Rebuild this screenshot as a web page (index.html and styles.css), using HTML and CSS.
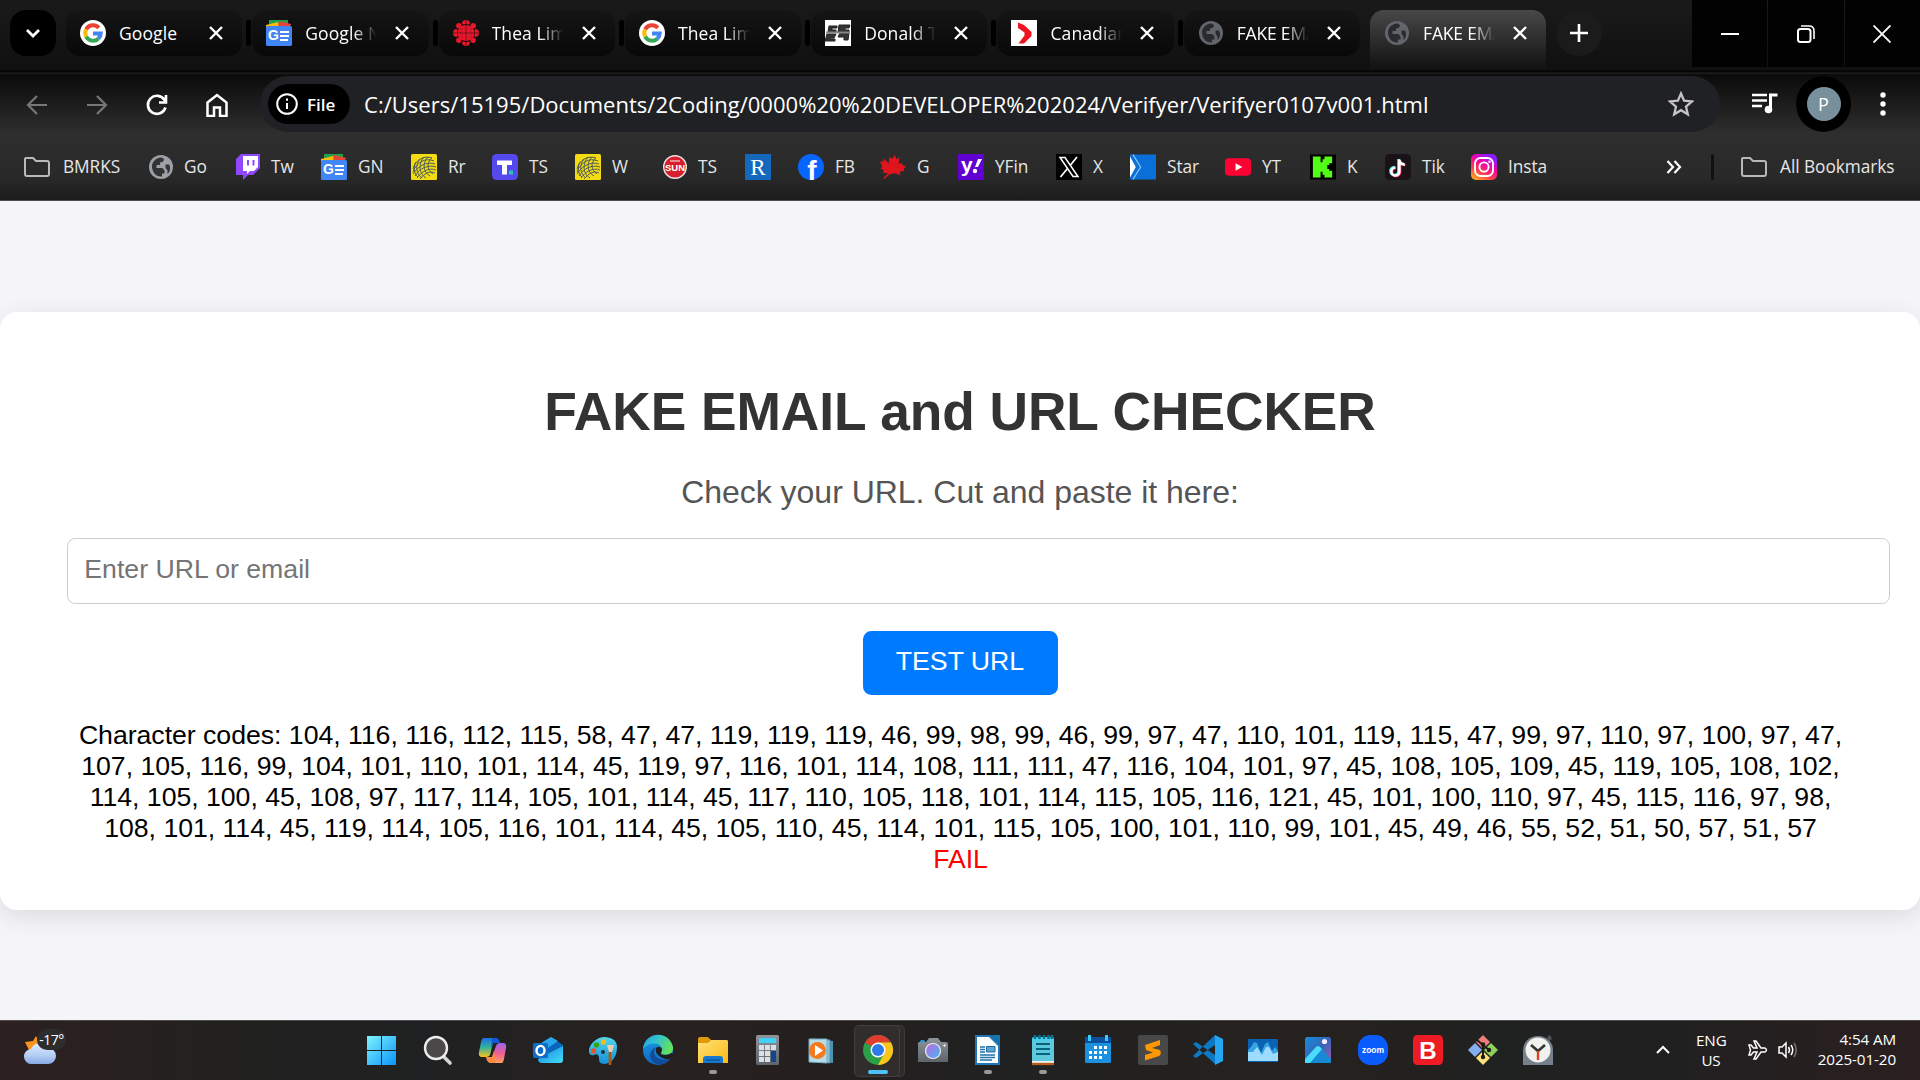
FILE: index.html
```html
<!DOCTYPE html>
<html lang="en">
<head>
<meta charset="utf-8">
<title>FAKE EMAIL and URL CHECKER</title>
<link rel="stylesheet" href="styles.css">
</head>
<body>
<svg class="defs" width="0" height="0" aria-hidden="true">
  <defs>
    <linearGradient id="win" x1="0" y1="0" x2="1" y2="1"><stop offset="0" stop-color="#7ff3ff"/><stop offset="1" stop-color="#0a93f8"/></linearGradient>
    <linearGradient id="cop1" x1="0" y1="0" x2="0" y2="1"><stop offset="0" stop-color="#1c6fe8"/><stop offset=".5" stop-color="#35b39a"/><stop offset="1" stop-color="#f8c21c"/></linearGradient>
    <linearGradient id="cop2" x1="0" y1="0" x2="0" y2="1"><stop offset="0" stop-color="#9a63f0"/><stop offset=".55" stop-color="#f4608c"/><stop offset="1" stop-color="#ffa05a"/></linearGradient>
    <linearGradient id="blue" x1="0" y1="0" x2="1" y2="1"><stop offset="0" stop-color="#1182dc"/><stop offset="1" stop-color="#45dcf8"/></linearGradient>
    <linearGradient id="sky" x1="0" y1="0" x2="0" y2="1"><stop offset="0" stop-color="#4fd6f0"/><stop offset="1" stop-color="#1590d8"/></linearGradient>
    <linearGradient id="edgeTop" x1="0" y1="0" x2="1" y2=".4"><stop offset="0" stop-color="#1f9fe0"/><stop offset=".5" stop-color="#35c4cc"/><stop offset="1" stop-color="#62e05e"/></linearGradient>
    <linearGradient id="edgeLow" x1="0" y1="0" x2="0" y2="1"><stop offset="0" stop-color="#1c9be2"/><stop offset="1" stop-color="#0d67c6"/></linearGradient>
    <linearGradient id="yellow" x1="0" y1="0" x2="1" y2="1"><stop offset="0" stop-color="#ffe07a"/><stop offset="1" stop-color="#fbbb12"/></linearGradient>
    <linearGradient id="metal" x1="0" y1="0" x2="0" y2="1"><stop offset="0" stop-color="#8d949b"/><stop offset="1" stop-color="#5e646a"/></linearGradient>
    <linearGradient id="lens" x1="0" y1="0" x2="1" y2="1"><stop offset="0" stop-color="#c765e0"/><stop offset="1" stop-color="#3bb8f6"/></linearGradient>
    <linearGradient id="photo" x1="0" y1="0" x2="1" y2="1"><stop offset="0" stop-color="#168ce0"/><stop offset=".5" stop-color="#3566b8"/><stop offset="1" stop-color="#a758b0"/></linearGradient>
    <linearGradient id="insta" x1="0" y1="1" x2=".6" y2="0"><stop offset="0" stop-color="#ffc414"/><stop offset=".4" stop-color="#ff3b52"/><stop offset=".7" stop-color="#f400a8"/><stop offset="1" stop-color="#8a1cff"/></linearGradient>
    <linearGradient id="cloud" x1="0" y1="0" x2="0" y2="1"><stop offset="0" stop-color="#dcebff"/><stop offset=".6" stop-color="#b4cdf5"/><stop offset="1" stop-color="#87a9e6"/></linearGradient>
    <symbol id="google" viewBox="0 0 26 26"><circle cx="13" cy="13" r="13" fill="#fff"/><g fill="none" stroke-width="4"><path d="M6.2 9.4A7.8 7.8 0 0 1 18.8 7.8" stroke="#ea4335"/><path d="M6.2 16.6A7.8 7.8 0 0 1 6.2 9.4" stroke="#fbbc05"/><path d="M18.3 18.7A7.8 7.8 0 0 1 6.2 16.6" stroke="#34a853"/><path d="M13 13.4H20.7A7.8 7.8 0 0 1 18.3 18.7" stroke="#4285f4"/></g></symbol>
    <symbol id="globe" viewBox="0 0 24 24"><circle cx="12" cy="12" r="12" fill="currentColor"/><path d="M3 10C4 6 8 2 12.500 2.500L15 4C15 6 13.500 7.500 11 7.500V10H7.500V13H13.500L15.500 15.500V18.500H13V21.500C7 22 2.500 17 3 10ZM16.500 9.500H20C22 13 21 17 18.500 19V15.500L16.500 13Z" fill="#222326" opacity=".88"/></symbol>
    <symbol id="gnews" viewBox="0 0 26 26"><path d="M3 0H22V8H3Z" fill="#24a04c"/><path d="M0 5 12 2 14 9H0Z" fill="#fbbc05"/><path d="M13 1 25 4 23 9H12Z" fill="#ea4335"/><rect y="6" width="26" height="20" rx="1.500" fill="#4285f4"/><text x="2" y="20" class="mark gn-mark">G</text><path d="M14 12h9M14 16h9M14 20h8" stroke="#fff" stroke-width="2"/></symbol>
    <symbol id="folder" viewBox="0 0 28 22"><path d="M3 2H10L13 5H24Q26 5 26 7V18Q26 20 24 20H4Q2 20 2 18V3Q2 2 3 2Z" fill="none" stroke="#b9b9b9" stroke-width="2"/></symbol>
    <symbol id="ball" viewBox="0 0 26 26"><rect width="26" height="26" rx="1.500" fill="#f5dc12"/><g fill="none" stroke="#4a5c5c" stroke-width="1"><path d="M2 15C4 6 13 1 21 4M2 18C5 9 14 3 23 7M2 20C7 12 16 7 24 10M4 22C8 15 17 10 25 13M6 24C10 18 18 13 25 16M9 25C13 20 19 16 24 19M5 8C2 13 3 20 7 23M9 5C4 11 5 20 11 24M13 3C7 10 8 20 15 24M17 3C11 9 12 18 19 22M21 4C15 9 16 16 22 20"/></g></symbol>
    <symbol id="cross" viewBox="0 0 16 16"><path d="M2 2 14 14M14 2 2 14" stroke="#fff" stroke-width="2.400"/></symbol>
  </defs>
</svg>

<header class="browser">
  <div class="tabstrip">
    <button class="tab-search"><svg width="16" height="12"><path d="M2 3 8 9 14 3" fill="none" stroke="#fff" stroke-width="2.800"/></svg></button>
    <div class="tabs">
      <div class="tab"><svg class="fav"><use href="#google"/></svg><span class="tab-title full">Google</span><svg class="close"><use href="#cross"/></svg></div>
      <div class="tab"><svg class="fav"><use href="#gnews"/></svg><span class="tab-title">Google News</span><svg class="close"><use href="#cross"/></svg></div>
      <div class="tab"><svg class="fav" viewBox="0 0 26 26"><g fill="#e8172b"><circle cx="13" cy="13" r="5.200"/><path d="M7 7Q13 3 19 7L17 9.500Q13 7 9 9.500ZM7 19Q13 23 19 19L17 16.500Q13 19 9 16.500ZM6.500 7.500Q2.500 13 6.500 18.500L9 16.500Q6.500 13 9 9.500ZM19.500 7.500Q23.500 13 19.500 18.500L17 16.500Q19.500 13 17 9.500Z"/><path d="M9 4A4 4 0 0 1 17 4L16 4.500Q13 3.600 10 4.500ZM9 22A4 4 0 0 0 17 22L16 21.500Q13 22.400 10 21.500ZM4 9A4 4 0 0 0 4 17L4.500 16Q3.600 13 4.500 10ZM22 9A4 4 0 0 1 22 17L21.500 16Q22.400 13 21.500 10Z"/><circle cx="5.800" cy="5.800" r="2.700"/><circle cx="20.200" cy="5.800" r="2.700"/><circle cx="5.800" cy="20.200" r="2.700"/><circle cx="20.200" cy="20.200" r="2.700"/></g><path d="M13 0V26M0 13H26" stroke="#0c0c0c" stroke-width=".5"/></svg><span class="tab-title">Thea Limber</span><svg class="close"><use href="#cross"/></svg></div>
      <div class="tab"><svg class="fav"><use href="#google"/></svg><span class="tab-title">Thea Limber</span><svg class="close"><use href="#cross"/></svg></div>
      <div class="tab"><svg class="fav" viewBox="0 0 26 26"><rect width="26" height="26" fill="#fff"/><path d="M4 6H12V8H7V10H11V12H3ZM14 5H25L24 8H20V10H24V12H13ZM2 14H11L9 18H5V19H10V21H0ZM15 13H24L23 20H19V17H13Z" fill="#333" stroke="#222"/><path d="M1 12.500H25" stroke="#888" stroke-width="2"/></svg><span class="tab-title">Donald Trump</span><svg class="close"><use href="#cross"/></svg></div>
      <div class="tab"><svg class="fav" viewBox="0 0 26 26"><rect width="26" height="26" fill="#fff"/><path d="M7 2.500 13 5 20.500 12V16L13 23.500H7.500L13.500 15.500V12.500L7 8Z" fill="#ee1420"/></svg><span class="tab-title">Canadian news</span><svg class="close"><use href="#cross"/></svg></div>
      <div class="tab"><svg class="fav globe dim"><use href="#globe"/></svg><span class="tab-title fake">FAKE EMAIL</span><svg class="close"><use href="#cross"/></svg></div>
      <div class="tab active"><svg class="fav globe dim"><use href="#globe"/></svg><span class="tab-title fake">FAKE EMAIL</span><svg class="close"><use href="#cross"/></svg></div>
    </div>
    <button class="new-tab"><svg width="18" height="18"><path d="M9 0V18M0 9H18" stroke="#fff" stroke-width="2.600"/></svg></button>
    <div class="window-buttons">
      <span><svg width="18" height="18"><path d="M0 9H18" stroke="#fff" stroke-width="2"/></svg></span>
      <span><svg width="18" height="18"><rect x="1" y="4" width="12.500" height="13" rx="2.500" fill="none" stroke="#fff" stroke-width="2"/><path d="M4 1H12Q17 1 17 6V14" fill="none" stroke="#fff" stroke-width="1.600"/></svg></span>
      <span><svg width="18" height="18"><path d="M.5 .5 17.500 17.500M17.500 .5 .5 17.500" stroke="#fff" stroke-width="1.900"/></svg></span>
    </div>
  </div>

  <div class="toolbar">
    <div class="nav">
      <svg viewBox="0 0 24 24"><path d="M22 12H3M12 3 3 12 12 21" fill="none" stroke="#777" stroke-width="2.200"/></svg>
      <svg viewBox="0 0 24 24"><path d="M2 12H21M12 3 21 12 12 21" fill="none" stroke="#777" stroke-width="2.200"/></svg>
      <svg viewBox="0 0 24 24"><path d="M20.500 14.500A9 9 0 1 1 19.500 7L21 9M21 2V9.500H14" fill="none" stroke="#fff" stroke-width="2.600"/></svg>
      <svg viewBox="0 0 24 24"><path d="M2.500 9.500 12 2 21.500 9.500V23H15V14.500H9V23H2.500Z" fill="none" stroke="#fff" stroke-width="2.500"/></svg>
    </div>
    <div class="omnibox">
      <span class="chip"><svg width="22" height="22"><circle cx="11" cy="11" r="9.800" fill="none" stroke="#fff" stroke-width="2"/><path d="M11 10V16M11 5.500V7.800" stroke="#fff" stroke-width="2"/></svg>File</span>
      <span class="url">C:/Users/15195/Documents/2Coding/0000%20%20DEVELOPER%202024/Verifyer/Verifyer0107v001.html</span>
      <svg class="star" viewBox="0 0 26 26"><path d="M13 2.500 16.100 9.700 24 10.400 18 15.600 19.800 23.300 13 19.200 6.200 23.300 8 15.600 2 10.400 9.900 9.700Z" fill="none" stroke="#c4c4c4" stroke-width="2.300"/></svg>
    </div>
    <svg class="media" viewBox="0 0 26 22"><path d="M0 2H15M0 7.500H15M0 13H10" stroke="#fff" stroke-width="2.500"/><path d="M18.500 16.500V2H25.500" fill="none" stroke="#fff" stroke-width="3"/><circle cx="16.500" cy="16.500" r="3.800" fill="#fff"/></svg>
    <span class="profile"><span>P</span></span>
    <svg class="dots" viewBox="0 0 6 24"><g fill="#fff"><circle cx="3" cy="3" r="2.700"/><circle cx="3" cy="12" r="2.700"/><circle cx="3" cy="21" r="2.700"/></g></svg>
  </div>

  <nav class="bookmarks">
    <span class="bm"><svg class="folder"><use href="#folder"/></svg>BMRKS</span>
    <span class="bm"><svg class="globe"><use href="#globe"/></svg>Go</span>
    <span class="bm tw"><svg viewBox="0 0 26 26"><path d="M6 0H25V14L18 21H13L8 26V21H1V5Z" fill="#9147ff"/><path d="M8 2H23V13L19 17H15L12 20V17H8Z" fill="#fff"/><path d="M13 6V11.500M18.500 6V11.500" stroke="#9147ff" stroke-width="2"/></svg>Tw</span>
    <span class="bm"><svg><use href="#gnews"/></svg>GN</span>
    <span class="bm"><svg><use href="#ball"/></svg>Rr</span>
    <span class="bm"><svg viewBox="0 0 26 26"><rect width="26" height="26" rx="4.500" fill="#5448ee"/><path d="M5 6.500H20V11H15V20.500H10V11H5Z" fill="#fff"/><rect x="17" y="16.500" width="4" height="4" fill="#1ccba8"/></svg>TS</span>
    <span class="bm"><svg><use href="#ball"/></svg>W</span>
    <span class="bm"><svg class="globe" viewBox="0 0 24 24"><circle cx="12" cy="12" r="11.300" fill="#d81e2c" stroke="#e9e4e4" stroke-width="1.400"/><text x="12" y="15.800" class="mark sun-mark">SUN</text><path d="M7 6H17" stroke="#f2b6bb" stroke-width="1.400"/></svg>TS</span>
    <span class="bm"><svg viewBox="0 0 26 26"><rect width="26" height="26" fill="#1569bd"/><text x="13" y="21" class="mark r-mark">R</text></svg></span>
    <span class="bm"><svg viewBox="0 0 26 26"><circle cx="13" cy="13" r="13" fill="#0866ff"/><text x="14" y="26" class="mark f-mark">f</text></svg>FB</span>
    <span class="bm"><svg viewBox="0 0 27 26"><path d="M15.500 .5 17 5 20 3 19.500 10 22.500 8.500 23.500 11 27 12.500 24.500 15 25.500 17 20.500 18 21 21.500 15.500 19.500 10 20.500 4.500 25.500 3.500 24.500 8.500 19.500 3 19 4 16.500 .5 14.500 2.500 12.500 0 7.500 3.500 7 4.500 4.500 9 9.500 9.500 3 12.500 4.500Z" fill="#df151e"/></svg>G</span>
    <span class="bm"><svg viewBox="0 0 26 26"><rect width="26" height="26" fill="#6001d2"/><text x="3" y="18" class="mark y-mark">y</text><path d="M17 13 20 5H24L20 13Z" fill="#fff"/><circle cx="17" cy="17" r="2.200" fill="#fff"/></svg>YFin</span>
    <span class="bm"><svg viewBox="0 0 26 26"><rect width="26" height="26" fill="#000"/><path d="M4 3.500H9L22 22.500H17Z" fill="none" stroke="#fff" stroke-width="1.500"/><path d="M21 3 14.500 11M11.500 14.500 4.500 23" stroke="#fff" stroke-width="1.700"/></svg>X</span>
    <span class="bm"><svg viewBox="0 0 27 26"><rect width="27" height="26" fill="#0a6fd8"/><path d="M0 2 6 13 0 24Z" fill="#fff"/><path d="M3 0 11 13 3 26" fill="none" stroke="#8fc6f2" stroke-width="1.300"/></svg>Star</span>
    <span class="bm"><svg viewBox="0 0 27 26"><rect y="4" width="27" height="18" rx="4" fill="#ff0033"/><path d="M11 9 18 13 11 17Z" fill="#fff"/></svg>YT</span>
    <span class="bm"><svg viewBox="0 0 27 26"><rect width="27" height="26" fill="#000"/><path d="M3 2H11V8H13V5H15V2H23V9H20V11H18V15H20V17H23V24H15V21H13V18H11V24H3Z" fill="#53fc18"/></svg>K</span>
    <span class="bm"><svg viewBox="0 0 26 26"><rect width="26" height="26" rx="4.500" fill="#1b1218"/><g fill="none" stroke-width="2.700"><path d="M13.500 5V17A4 4 0 1 1 9.500 13M13.500 6Q14.500 10 19 10" stroke="#25f4ee"/><path d="M15 6V18A4 4 0 1 1 11 14M15 7Q16 11 20.500 11" stroke="#fe2c55"/><path d="M14.300 5.500V17.500A4 4 0 1 1 10.300 13.500M14.300 6.500Q15.300 10.500 19.800 10.500" stroke="#fff"/></g></svg>Tik</span>
    <span class="bm"><svg viewBox="0 0 26 26"><rect width="26" height="26" rx="5" fill="url(#insta)"/><g fill="none" stroke="#fff" stroke-width="1.900"><rect x="4" y="4" width="18" height="18" rx="5.500"/><circle cx="13" cy="13" r="4.600"/></g><circle cx="18.500" cy="7.700" r="1.200" fill="#fff"/></svg>Insta</span>
    <span class="bm"><svg class="more" viewBox="0 0 16 14"><path d="M1.500 1 7 7 1.500 13M8.500 1 14 7 8.500 13" fill="none" stroke="#fff" stroke-width="2.200"/></svg></span>
    <span class="divider"></span>
    <span class="bm"><svg class="folder"><use href="#folder"/></svg>All Bookmarks</span>
  </nav>
</header>

<main class="page">
  <section class="card">
    <h1>FAKE EMAIL and URL CHECKER</h1>
    <p class="lead">Check your URL. Cut and paste it here:</p>
    <input class="url-input" type="text" placeholder="Enter URL or email">
    <button class="test">TEST URL</button>
    <div class="result">Character codes: 104, 116, 116, 112, 115, 58, 47, 47, 119, 119, 119, 46, 99, 98, 99, 46, 99, 97, 47, 110, 101, 119, 115, 47, 99, 97, 110, 97, 100, 97, 47, 107, 105, 116, 99, 104, 101, 110, 101, 114, 45, 119, 97, 116, 101, 114, 108, 111, 111, 47, 116, 104, 101, 97, 45, 108, 105, 109, 45, 119, 105, 108, 102, 114, 105, 100, 45, 108, 97, 117, 114, 105, 101, 114, 45, 117, 110, 105, 118, 101, 114, 115, 105, 116, 121, 45, 101, 100, 110, 97, 45, 115, 116, 97, 98, 108, 101, 114, 45, 119, 114, 105, 116, 101, 114, 45, 105, 110, 45, 114, 101, 115, 105, 100, 101, 110, 99, 101, 45, 49, 46, 55, 52, 51, 50, 57, 51, 57<br><span class="fail">FAIL</span></div>
  </section>
</main>

<footer class="taskbar">
  <div class="weather"><svg width="34" height="34" viewBox="0 0 34 34"><path d="M1 10 9 9 12 4 15 10 14 20 6 20Z" fill="#f7941d"/><path d="M8 32A7.500 7.500 0 0 1 7 17 9.500 9.500 0 0 1 24 16 8 8 0 0 1 24 32Z" fill="url(#cloud)"/></svg><span class="temp">-17°</span></div>
  <div class="apps">
    <span class="app"><svg viewBox="0 0 30 30"><path d="M-1 1H13V15H-1ZM14 1H28V15H14ZM-1 16H13V30H-1ZM14 16H28V30H14Z" fill="url(#win)"/></svg></span>
    <span class="app"><svg viewBox="0 0 30 30"><path d="M20 21 27 28" stroke="#d5d5d8" stroke-width="3.600" stroke-linecap="round"/><circle cx="13" cy="13" r="11" fill="#4a4848" stroke="#ededed" stroke-width="2.400"/></svg></span>
    <span class="app"><svg viewBox="0 0 30 30"><path d="M6 3H17Q20 3 21 8H15L12 20Q11 22 8 22H4Q0 22 1 17L3 7Q4 3 6 3Z" fill="url(#cop1)"/><path d="M14 3H18Q21 3 22 8H16Q14 8 13 14Z" fill="#1457d3"/><path d="M24 28H13Q10 28 8 22H14L18 11Q19 8 22 8H25Q29 8 28 13L26 24Q25 28 24 28Z" fill="url(#cop2)"/><path d="M8 22H14L16 16 18 28H13Q9 28 8 22Z" fill="#fb8c48"/></svg></span>
    <span class="app"><svg viewBox="0 0 30 30"><path d="M5 10 18 2 30 10V22H5Z" fill="#0a66bd"/><path d="M5 10 18 2 25 6 12 15Z" fill="#28a8ea"/><path d="M14 19 30 11V25Q30 28 27 28H9Q5 28 5 24Z" fill="url(#blue)"/><rect x="0" y="8" width="15" height="15" rx="1.500" fill="#0f6cca"/><ellipse cx="7.500" cy="15.500" rx="4" ry="4.600" fill="none" stroke="#fff" stroke-width="2.400"/></svg></span>
    <span class="app"><svg viewBox="0 0 30 30"><path d="M17 2C8 2 0 10 1 17Q2 21 6 20Q10 18 11 22C11 26 11 29 17 29C25 28 29 20 29 12Q29 3 17 2Z" fill="url(#sky)"/><circle cx="5.500" cy="16" r="2.700" fill="#e9532a"/><circle cx="8.500" cy="10" r="2.700" fill="#36a318"/><circle cx="15.500" cy="7" r="2.700" fill="#f5bd17"/><circle cx="15" cy="17" r="2" fill="#20353f"/><path d="M22 16V30" stroke="#a85a14" stroke-width="2.800"/><path d="M19 10H26L24 17H21Z" fill="#edcfae"/></svg></span>
    <span class="app"><svg viewBox="0 0 30 30"><circle cx="15" cy="15" r="15" fill="url(#edgeLow)"/><path d="M0 14C2-4 26-5 30 12C31 19 24 21 19 19C17 18 20 16 19 13C16 7 6 7 0 14Z" fill="url(#edgeTop)"/><path d="M13 12C7 21 17 27 27 24C21 33 8 30 7 21Q7 15 13 12Z" fill="#114b9a"/><path d="M13 13Q17 10 19 14Q19 16 18 17.500Q17 20 22 20Q26 20 28.500 18L31 20L27.500 24Q20 25 15 20Q12 17 13 13Z" fill="#211f1f"/></svg></span>
    <span class="app running"><svg viewBox="0 0 30 30"><path d="M0 4Q0 2 2 2H10L13 5V10H0Z" fill="#dd9a06"/><path d="M0 8H10L13 5H29Q30 5 30 7V28H0Z" fill="url(#yellow)"/><path d="M5 28V24Q5 21 8 21H22Q25 21 25 24V28Z" fill="#1479cf"/><path d="M8 25H22" stroke="#0b4f91" stroke-width="1.200"/></svg></span>
    <span class="app"><svg viewBox="0 0 30 30"><rect x="3" width="23" height="30" rx="1.500" fill="url(#metal)"/><rect x="6" y="3" width="17" height="5" fill="#3fd2f8"/><g fill="#dcdfe4"><path d="M6 10H11V15H6ZM12 10H17V15H12ZM18 10H23V15H18ZM6 16H11V21H6ZM12 16H17V21H12ZM6 22H11V27H6ZM12 22H17V27H12Z"/></g><rect x="18" y="16" width="5" height="11" fill="#12478e"/></svg></span>
    <span class="app"><svg viewBox="0 0 30 30"><path d="M5 4 25 6V28L5 26Z" fill="#4b94b4"/><path d="M3 4 22 5V28L3 26Z" fill="#8dc3d8" stroke="#4c8fac"/><path d="M1 4H19V28L1 27Z" fill="#b9dce8" stroke="#6ca9c0"/><circle cx="9.500" cy="15.500" r="8.500" fill="#f47a20"/><path d="M7 10 15 15.500 7 21Z" fill="#fff"/></svg></span>
    <span class="app active-app"><svg viewBox="0 0 30 30"><circle cx="15" cy="15" r="15" fill="#2a9f48"/><path d="M15 15 2 7.500A15 15 0 0 1 28 7.500H15Z" fill="#e13b2e"/><path d="M28 7.500A15 15 0 0 1 15 30L21.500 18 15 7.500Z" fill="#fcc51b"/><circle cx="15" cy="15" r="7.500" fill="#fff"/><circle cx="15" cy="15" r="6" fill="#2b7ae9"/></svg></span>
    <span class="app"><svg viewBox="0 0 30 30"><rect x="2" y="5" width="5" height="3" rx="1.500" fill="#189be0"/><path d="M0 8Q0 7 2 7H8L11 3H20L23 7H28Q30 7 30 9V27H0Z" fill="url(#metal)"/><circle cx="15" cy="16" r="7.500" fill="url(#lens)" stroke="#eee" stroke-width="1.200"/><path d="M26.500 9V12M25 10.500H28" stroke="#ddd"/></svg></span>
    <span class="app running"><svg viewBox="0 0 30 30"><path d="M2 0H18L27 9V30H2Z" fill="#2176b8"/><path d="M4 2H16L25 11V28H4Z" fill="#fff"/><path d="M18 0H27V9Z" fill="#1478b0"/><path d="M7 12H12M7 14.500H12M7 17H12M7 20H22M7 22.500H22M7 25H19" stroke="#2072a8" stroke-width="1.300"/><path d="M13.500 17V11.500H22V17Z" fill="#5aa4cf" stroke="#206ba0"/></svg></span>
    <span class="app running"><svg viewBox="0 0 30 30"><rect x="4" y="2" width="22" height="26" rx="1.500" fill="url(#sky)"/><rect x="4" y="6" width="22" height="20" fill="#5ec8dc"/><path d="M8 9H22M8 14H22M8 19H22" stroke="#07627d" stroke-width="2"/><path d="M7 0V4M11.500 0V4M16 0V4M20.500 0V4M24 0V4" stroke="#08738e" stroke-width="2.600"/><path d="M4 27H26" stroke="#eee" stroke-width="2"/><path d="M4 29H26" stroke="#b45b1e" stroke-width="2.300"/></svg></span>
    <span class="app"><svg viewBox="0 0 30 30"><rect x="2" y="2" width="26" height="26" rx="1.500" fill="#1b91e0"/><rect x="2" y="2" width="26" height="6" fill="#0c4f9e"/><path d="M6.500 0V6M23.500 0V6" stroke="#3acef7" stroke-width="3"/><path d="M11 11H14V14H11ZM16 11H19V14H16ZM21 11H24V14H21ZM6 16H9V19H6ZM11 16H14V19H11ZM16 16H19V19H16ZM21 16H24V19H21ZM6 21H9V24H6ZM11 21H14V24H11ZM16 21H19V24H16Z" fill="#fff"/></svg></span>
    <span class="app"><svg viewBox="0 0 30 30"><rect width="30" height="30" rx="2" fill="#484848"/><path d="M7 10 22 5V10L14 13 22 15Q24 19 21 21L7 25.500V20L15 17.500 8 15Z" fill="#ff9800"/></svg></span>
    <span class="app"><svg viewBox="0 0 30 30"><path d="M0 9 3 7 22 20V29ZM0 21 3 23 22 10V0Z" fill="#0b79c8"/><path d="M22 0 30 4V26L22 30Z" fill="#26a5f2"/></svg></span>
    <span class="app"><svg viewBox="0 0 30 30"><rect y="4" width="30" height="23" rx="1" fill="#0b62b2"/><path d="M0 15 3 12 6 7 9 8 13 18 17 9 20 7 24 16 27 12 30 16V26H0Z" fill="#36a5e2"/><path d="M0 17H5L9 12 14 20 18 12 21 12 25 19 30 17V26H0Z" fill="#9ddcff"/></svg></span>
    <span class="app"><svg viewBox="0 0 30 30"><rect x="2" y="2" width="26" height="26" rx="2" fill="url(#photo)"/><path d="M2 24 13 12Q15 10 17 12L28 24V28H2Z" fill="#168bd4"/><path d="M2 24 13 12Q15 10 17 12L19 14 7 28H2Z" fill="#4bdcfb"/><circle cx="21.500" cy="6.500" r="2.600" fill="#f5ecff"/></svg></span>
    <span class="app"><svg viewBox="0 0 30 30"><rect width="30" height="30" rx="12.500" fill="#0b5cff"/><text x="15" y="17.500" class="mark zoom-mark">zoom</text></svg></span>
    <span class="app"><svg viewBox="0 0 30 30"><rect width="30" height="30" rx="4.500" fill="#ed1c24"/><text x="15" y="24" class="mark b-mark">B</text></svg></span>
    <span class="app"><svg viewBox="0 0 30 30"><path d="M15 0 22 7 15 14 8 7Z" fill="#f07d7d"/><path d="M7 8 14 15 7 22 0 15Z" fill="#85aff3"/><path d="M23 8 30 15 23 22 16 15Z" fill="#8ed25a"/><path d="M15 16 22 23 15 30 8 23Z" fill="#fbe07b"/><path d="M9 5 15 10V23M15 10 21 15" fill="none" stroke="#211b18" stroke-width="2"/><circle cx="15" cy="9.500" r="2.200" fill="#211b18"/><circle cx="15" cy="22" r="2.200" fill="#211b18"/><circle cx="21" cy="15" r="2.200" fill="#211b18"/></svg></span>
    <span class="app"><svg viewBox="0 0 30 30"><path d="M24 2 27 0 29 4 26 6Z" fill="#54514f"/><path d="M0 30V15A15 14 0 0 1 30 15V30Z" fill="#76818c"/><circle cx="15" cy="15" r="12.500" fill="#f1f1ef"/><path d="M8 10 15 16 22 10" fill="none" stroke="#343434" stroke-width="2.700"/><path d="M15 16V25" stroke="#d94719" stroke-width="2.400"/></svg></span>
  </div>
  <div class="tray">
    <svg class="chev" viewBox="0 0 14 10"><path d="M1 8 7 2 13 8" fill="none" stroke="#fff" stroke-width="2"/></svg>
    <div class="lang">ENG<br>US</div>
    <svg class="plane" viewBox="0 0 20 20"><path d="M1 5H3L5.500 8H9L6 1H8L13 8H17Q20 10 17 12H13L8 19H6L9 12H5.500L3 15H1L2.500 10Z" fill="none" stroke="#fff" stroke-width="1.500"/></svg>
    <svg class="sound" viewBox="0 0 20 18"><path d="M1 6H4L8 2V16L4 12H1Z" fill="none" stroke="#fff" stroke-width="1.500"/><path d="M10.500 6Q12.500 9 10.500 12M13 4Q16.500 9 13 14" fill="none" stroke="#fff" stroke-width="1.500"/><path d="M16 2Q20.500 9 16 16" fill="none" stroke="#777" stroke-width="1.400"/></svg>
    <div class="clock">4:54 AM<br>2025-01-20</div>
  </div>
</footer>
</body>
</html>
```
FILE: styles.css
```css
* { box-sizing: border-box; }

body {
  margin: 0;
  width: 1920px;
  height: 1080px;
  overflow: hidden;
  display: flex;
  flex-direction: column;
  background: #f4f4f9;
  font-family: "Liberation Sans", Arial, sans-serif;
}

button { border: 0; padding: 0; }
svg { display: block; flex: none; }
.defs { position: absolute; }

/* Browser chrome */
.browser {
  flex: none;
  height: 201px;
  background: #111;
  border-bottom: 1px solid #4b4b4b;
  font-family: "Open Sans", "Noto Sans", sans-serif;
  color: #fff;
}

.tabstrip {
  display: flex;
  height: 75px;
  padding-left: 10px;
  background: linear-gradient(#1a1a1a, #101010 70px, #050505 71px, #050505 72px, #242424 73px, #050505 75px);
}

.tab-search {
  display: grid;
  place-items: center;
  width: 46px;
  height: 46px;
  margin-top: 10px;
  border-radius: 16px;
  background: #000;
}

.tabs { display: flex; margin-left: 10px; }

.tab {
  display: flex;
  align-items: center;
  width: 176.300px;
  height: 46px;
  margin: 10px 10px 0 0;
  padding-left: 14px;
  border-radius: 14px;
  background: linear-gradient(#151515, #080808);
  position: relative;
}

.tab:not(:last-child)::after {
  content: "";
  position: absolute;
  right: -9px;
  top: 10px;
  width: 5px;
  height: 26px;
  border-radius: 2px;
  background: #000;
}

.tab:nth-last-child(2)::after { display: none; }

.tab.active {
  height: 60px;
  padding-bottom: 14px;
  margin-right: 0;
  border-radius: 14px 14px 0 0;
  background: linear-gradient(#484848, #111);
}

.fav { width: 26px; height: 26px; }
.fav.globe { width: 24px; height: 24px; margin: 0 1px; }
.dim { color: #62666c; }

.tab-title {
  width: 74px;
  margin-left: 13px;
  overflow: hidden;
  white-space: nowrap;
  font-size: 17.500px;
  letter-spacing: .1px;
  -webkit-mask-image: linear-gradient(90deg, #000 48px, transparent 72px);
  mask-image: linear-gradient(90deg, #000 48px, transparent 72px);
}

.tab-title.full { -webkit-mask-image: none; mask-image: none; }
.tab-title.fake { letter-spacing: -.2px; }
.close { width: 16px; height: 16px; margin-left: 15px; }

.new-tab {
  display: grid;
  place-items: center;
  width: 46px;
  height: 46px;
  margin: 10px 0 0 10px;
  border-radius: 50%;
  background: #1b1b1b;
}

.window-buttons { display: flex; gap: 1px; height: 67px; margin-left: auto; }
.window-buttons span { display: grid; place-items: center; width: 75.300px; background: #020202; }

.toolbar {
  display: flex;
  align-items: center;
  height: 58px;
  background: linear-gradient(#0b0b0b, #2e2e2e);
}

.nav { display: flex; gap: 36px; width: 260px; padding: 1px 0 0 24.500px; }
.nav svg { width: 24px; height: 24px; }

.omnibox {
  display: flex;
  align-items: center;
  width: 1460px;
  height: 56px;
  padding-left: 8px;
  border-radius: 28px;
  background: #202124;
}

.chip {
  display: flex;
  align-items: center;
  gap: 9px;
  width: 82px;
  height: 40px;
  padding-left: 8px;
  border-radius: 20px;
  background: #000;
  font-size: 17px;
  font-weight: 600;
}

.url { width: 1090px; margin-left: 14px; white-space: nowrap; font-size: 22px; letter-spacing: .02px; }
.star { width: 26px; height: 26px; margin-left: 214px; }
.media { width: 26px; height: 22px; margin-left: 32px; }

.profile {
  display: grid;
  place-items: center;
  width: 55px;
  height: 56px;
  margin-left: 18px;
  border-radius: 50%;
  background: #000;
}

.profile span {
  width: 34px;
  height: 34px;
  border-radius: 50%;
  background: #78909c;
  font-size: 18px;
  line-height: 34px;
  text-align: center;
}

.dots { width: 6px; height: 24px; margin-left: 29px; }

.bookmarks {
  display: grid;
  grid-template-columns: 126px 86px 86px 90px 81px 83px 88px 82px 53px 82px 78px 98px 74px 95px 85px 75px 86px 195px 45px 29px 180px;
  align-items: center;
  height: 67px;
  padding-left: 23px;
  background: linear-gradient(#2e2e2e, #292929 45px, #1c1c1c);
}

.bm {
  display: flex;
  align-items: center;
  gap: 11px;
  white-space: nowrap;
  font-size: 17.300px;
  letter-spacing: -.05px;
  color: #e6e6e6;
}

.bm svg { width: 26px; height: 26px; }
.bm svg.folder { width: 28px; height: 22px; margin-right: 1px; }
.bm svg.globe { width: 24px; height: 24px; color: #9da1a7; }
.bm svg.more { width: 16px; height: 14px; }
.bm.tw { gap: 10px; }
.divider { width: 3px; height: 26px; border-radius: 2px; background: #111; }

/* Letters used inside site and app icons */
.mark { fill: #fff; font-family: "Liberation Sans", sans-serif; font-weight: 700; }
.gn-mark { font-size: 14px; }
.sun-mark { font-size: 9.500px; text-anchor: middle; }
.r-mark { font: 23px "Liberation Serif", serif; text-anchor: middle; }
.f-mark { font-size: 28px; text-anchor: middle; }
.y-mark { font-size: 21px; }
.zoom-mark { font-size: 8.500px; text-anchor: middle; }
.b-mark { font-size: 24px; text-anchor: middle; }

/* Page */
.page { flex: 1; padding-top: 111px; overflow: hidden; }

.card {
  height: 598px;
  padding: 69px 66.670px 0;
  border-radius: 16.670px;
  background: #fff;
  box-shadow: 0 6.670px 25px rgba(0, 0, 0, .1);
  text-align: center;
}

h1 { margin: 0; font-size: 53.330px; letter-spacing: -.08px; line-height: 61px; color: #333; }
.lead { margin: 32px 0 0; font-size: 32px; letter-spacing: -.02px; line-height: 37px; color: #555; }

.url-input {
  display: block;
  width: 1823px;
  height: 66px;
  margin-top: 27px;
  padding: 0 16.670px 3px;
  border: 1px solid #ccc;
  border-radius: 8.330px;
  background: #fff;
  font: 26.670px "Liberation Sans", Arial, sans-serif;
}

.url-input::placeholder { color: #757575; }

.test {
  width: 195px;
  height: 64px;
  margin-top: 27px;
  padding-bottom: 3px;
  border-radius: 8.330px;
  background: #007bff;
  color: #fff;
  font: 26.670px "Liberation Sans", Arial, sans-serif;
}

.result { margin-top: 25px; padding-left: 1px; font-size: 26.670px; letter-spacing: -.025px; line-height: 31px; color: #000; }
.fail { color: #f00; }

/* Taskbar */
.taskbar {
  flex: none;
  position: relative;
  display: flex;
  height: 60px;
  border-top: 1px solid #4c4c4a;
  background: linear-gradient(90deg, #2d2020, #222120 12%, #202122 22%, #272120 34%, #25201f 42%, #202121 53%, #26211e 68%, #202121 78%, #202020 86%, #2b1f20);
  font-family: "Open Sans", "Noto Sans", sans-serif;
  color: #fff;
}

.weather { position: relative; width: 355.500px; padding: 11px 0 0 24px; }

.temp {
  position: absolute;
  left: 37px;
  top: 8px;
  width: 29px;
  height: 21px;
  border-radius: 10px;
  background: #2e2d2d;
  font-size: 14px;
  letter-spacing: -.5px;
  line-height: 21px;
  text-align: center;
}

.apps { display: grid; grid-template-columns: repeat(22, 55px); }
.app { position: relative; display: grid; place-items: center; padding-bottom: 1px; }
.app svg { position: relative; width: 30px; height: 30px; overflow: visible; }

.running::after {
  content: "";
  position: absolute;
  left: 23.500px;
  bottom: 6px;
  width: 8px;
  height: 4px;
  border-radius: 2px;
  background: #999;
}

.active-app::before {
  content: "";
  position: absolute;
  left: 3px;
  top: 4px;
  width: 44px;
  height: 50px;
  border: 1px solid #414040;
  border-radius: 5px;
  background: #302d2c;
  box-shadow: 5px 0 0 -1px #2e2c2b, 5px 0 0 0 #3b3938;
}

.active-app::after {
  content: "";
  position: absolute;
  left: 17.500px;
  bottom: 6px;
  width: 20px;
  height: 4px;
  border-radius: 2px;
  background: #4cc2ff;
}

.tray { display: flex; align-items: center; flex: 1; justify-content: flex-end; padding: 0 24px 2px 0; }
.chev { width: 14px; height: 10px; margin-right: 26px; }
.lang, .clock { font-size: 15.200px; line-height: 20px; letter-spacing: -.1px; }
.lang { width: 30px; margin-right: 22px; text-align: center; }
.plane { width: 20px; height: 20px; margin-right: 10px; }
.sound { width: 20px; height: 18px; }
.clock { width: 98px; margin-top: -1px; text-align: right; }
```
